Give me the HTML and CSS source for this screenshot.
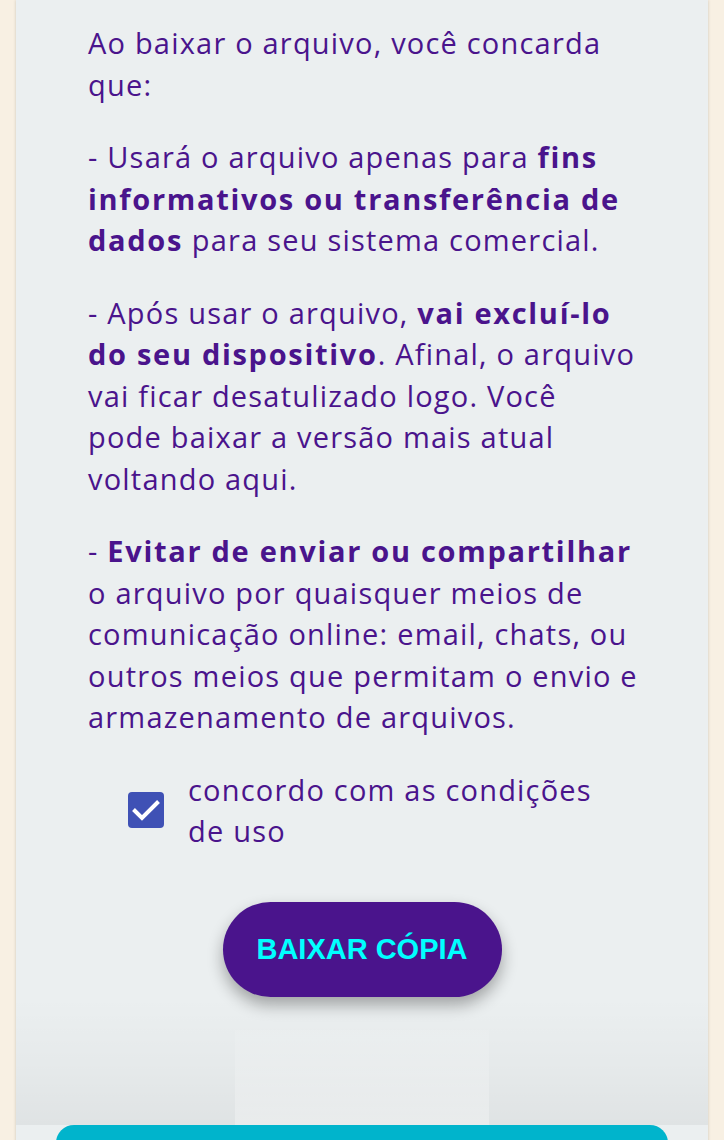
FILE: index.html
```html
<!DOCTYPE html>
<html lang="pt-BR">
<head>
<meta charset="utf-8">
<title>Baixar cópia</title>
<link rel="stylesheet" href="styles.css">
</head>
<body>
<main class="card">
  <div class="terms">
    <p>Ao baixar o arquivo, você concarda que:</p>
    <p>- Usará o arquivo apenas para <strong>fins informativos ou transferência de dados</strong> para seu sistema comercial.</p>
    <p class="narrow">- Após usar o arquivo, <strong>vai excluí-lo do seu dispositivo</strong>. Afinal, o arquivo vai ficar desatulizado logo. Você pode baixar a versão mais atual voltando aqui.</p>
    <p>- <strong>Evitar de enviar ou compartilhar</strong> o arquivo por quaisquer meios de comunicação online: email, chats, ou outros meios que permitam o envio e armazenamento de arquivos.</p>
    <label class="agree">
      <span class="box">
        <svg viewBox="0 0 36 36" width="36" height="36"><path d="M5.5 17.5 L14 26 L30.5 9.5" fill="none" stroke="#fff" stroke-width="4" stroke-linecap="butt"/></svg>
      </span>
      <span class="agree-text">concordo com as condições de uso</span>
    </label>
  </div>
  <div class="actions">
    <button class="download">BAIXAR CÓPIA</button>
  </div>
  <div class="lower">
    <div class="stripe"></div>
  </div>
  <div class="bar"></div>
</main>
</body>
</html>
```
FILE: styles.css
```css
* { box-sizing: border-box; }
html, body { margin: 0; padding: 0; }
body {
  background: #f8f0e3;
  font-family: "Open Sans", "Noto Sans", sans-serif;
  color: #4a148c;
  height: 1140px;
  overflow: hidden;
}
.card {
  margin: 0 16px;
  background: #ebeff0;
  box-shadow: 0 0 3px rgba(0,0,0,0.18);
  min-height: 1300px;
  padding-top: 22px;
}
.terms {
  padding: 0 60px 0 72px;
}
.terms p {
  margin: 0 0 31px;
  font-size: 29px;
  line-height: 41.5px;
  letter-spacing: 1.2px;
}
.terms p.narrow {
  max-width: 548px;
}
.terms strong {
  font-weight: 700;
  letter-spacing: 1.7px;
}
.agree {
  display: flex;
  align-items: center;
  gap: 24px;
  padding-left: 40px;
}
.box {
  flex: none;
  width: 36px;
  height: 36px;
  background: #3f51b5;
  border-radius: 4px;
  display: flex;
}
.agree-text {
  font-size: 29px;
  line-height: 41.5px;
  letter-spacing: 1.2px;
  width: 440px;
}
.actions {
  display: flex;
  justify-content: center;
  padding-top: 50px;
  position: relative;
  z-index: 1;
}
.download {
  width: 279px;
  height: 95px;
  border: none;
  border-radius: 48px;
  background: #4a148c;
  color: #00ffff;
  font-family: "Liberation Sans", Arial, sans-serif;
  font-weight: bold;
  font-size: 29px;
  box-shadow: 0 8px 16px rgba(0,0,0,0.32);
  cursor: pointer;
}
.lower {
  height: 128px;
  display: flex;
  justify-content: center;
  background: linear-gradient(180deg, rgba(0,0,0,0) 0%, rgba(0,0,0,0.025) 55%, rgba(0,0,0,0.05) 100%);
}
.stripe {
  width: 254px;
  margin-left: -1px;
  margin-top: 33px;
  background: linear-gradient(180deg, rgba(255,255,255,0.08), rgba(255,255,255,0.3));
}
.bar {
  margin: 0 40px;
  height: 80px;
  background: #00b4cc;
  border-radius: 18px 18px 0 0;
}
```
